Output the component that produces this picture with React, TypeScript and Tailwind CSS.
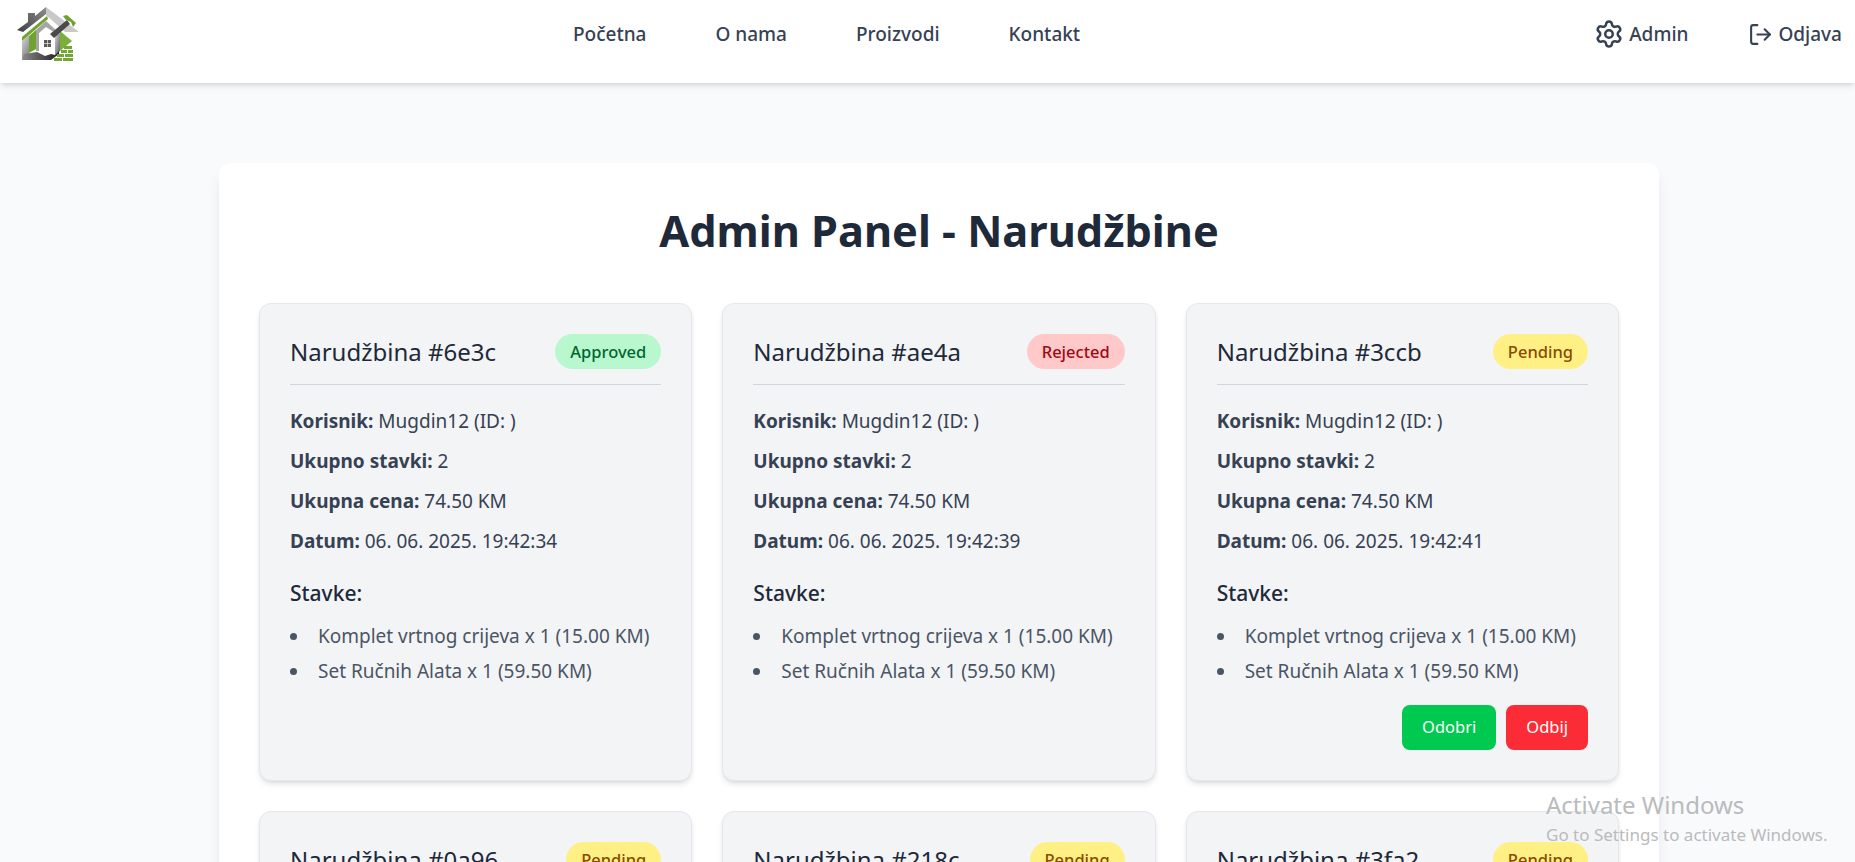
import React from 'react';
import { Settings, LogOut } from 'lucide-react';

const orders = [
  { id: '6e3c', status: 'Approved', date: '06. 06. 2025. 19:42:34' },
  { id: 'ae4a', status: 'Rejected', date: '06. 06. 2025. 19:42:39' },
  { id: '3ccb', status: 'Pending', date: '06. 06. 2025. 19:42:41' },
  { id: '0a96', status: 'Pending', date: '06. 06. 2025. 19:42:43' },
  { id: '218c', status: 'Pending', date: '06. 06. 2025. 19:42:45' },
  { id: '3fa2', status: 'Pending', date: '06. 06. 2025. 19:42:47' },
];

const Logo = () => (
  <svg viewBox="0 0 62 54" className="w-[62px] h-[54px] blur-[0.4px]">
    <defs>
      <linearGradient id="roofDark" x1="0" y1="1" x2="1" y2="0">
        <stop offset="0" stopColor="#3f3f3f" />
        <stop offset="1" stopColor="#8c8c8c" />
      </linearGradient>
      <linearGradient id="wall" x1="0" y1="0" x2="1" y2="1">
        <stop offset="0" stopColor="#d8d8d8" />
        <stop offset="1" stopColor="#5c5c5c" />
      </linearGradient>
      <linearGradient id="swoosh" x1="0" y1="0" x2="1" y2="0">
        <stop offset="0" stopColor="#8a8a8a" />
        <stop offset="1" stopColor="#202020" />
      </linearGradient>
    </defs>
    <polygon points="0,23 11,15 11,6 18,6 18,9 29,0 29,7 6,25" fill="url(#roofDark)" />
    <polygon points="29,0 62,25 48,25 29,8" fill="#c9c9c9" />
    <polygon points="5,30 30,9 31,12 5,34" fill="#6fa32e" />
    <polygon points="5,34 12,28 12,47 18,46 5,53" fill="url(#wall)" />
    <polygon points="12,29 19,23 19,42 12,46" fill="#6fa32e" />
    <polygon points="19,23 29,14 40,24 40,27 29,20 22,26 22,44 19,44" fill="#a5a5a5" />
    <polygon points="40,24 43,27 43,44 38,48 38,30" fill="url(#wall)" />
    <polygon points="43,24 55,34 43,44" fill="#7cae3a" />
    <polygon points="22,27 29,21 36,27 36,46 29,46 22,40" fill="#ffffff" />
    <rect x="27" y="33" width="7" height="7" fill="#5a5a5a" />
    <path d="M30.5 33v7M27 36.5h7" stroke="#ffffff" strokeWidth="0.6" />
    <polygon points="5,53 7,47 20,45 28,49 34,47 38,48 42,44 42,47 34,53" fill="url(#swoosh)" />
    <polygon points="33,27 50,13 53,17 37,31" fill="#4a4a4a" />
    <polygon points="46,9 49,13 54,15 56,20 59,16 50,8" fill="#6fa32e" />
    <g fill="#74a834">
      <rect x="47" y="39" width="8" height="3" />
      <rect x="44" y="43" width="6" height="3" />
      <rect x="51" y="43" width="5" height="3" />
      <rect x="40" y="47" width="7" height="3" />
      <rect x="48" y="47" width="8" height="3" />
      <rect x="37" y="51" width="8" height="3" />
      <rect x="46" y="51" width="10" height="3" />
    </g>
  </svg>
);

const StatusBadge = ({ status }: { status: string }) => {
  const color =
    status === 'Approved'
      ? 'bg-[#b9f8cf] text-[#016630]'
      : status === 'Rejected'
        ? 'bg-[#ffc9c9] text-[#9f0712]'
        : 'bg-[#fff085] text-[#894b00]';
  return <span className={`px-[15px] py-1 rounded-full text-[16.5px] font-medium leading-[27px] ${color}`}>{status}</span>;
};

const OrderCard = ({ order }: { order: (typeof orders)[number] }) => (
  <div className="h-[478px] bg-[#f3f4f6] border border-[#e5e7eb] rounded-xl shadow-md px-[30px] pt-[30px] flex flex-col">
    <div className="flex items-center justify-between pb-[15px] mb-[22px] border-b border-[#d1d5dc]">
      <h3 className="text-2xl font-normal text-[#1e2939] leading-[35px]">Narudžbina #{order.id}</h3>
      <StatusBadge status={order.status} />
    </div>
    <div className="text-[#364153] text-[19px] leading-7 space-y-3">
      <p><strong className="font-bold">Korisnik:</strong> Mugdin12 (ID: )</p>
      <p><strong className="font-bold">Ukupno stavki:</strong> 2</p>
      <p><strong className="font-bold">Ukupna cena:</strong> 74.50 KM</p>
      <p><strong className="font-bold">Datum:</strong> {order.date}</p>
    </div>
    <h4 className="mt-6 text-[21px] font-medium text-[#1e2939] leading-7">Stavke:</h4>
    <ul className="mt-[15px] text-[#4a5565] text-[19px] leading-7 space-y-[7px]">
      <li className="flex items-center"><span className="w-[7px] h-[7px] rounded-full bg-[#4a5565] mr-[21px]" />Komplet vrtnog crijeva x 1 (15.00 KM)</li>
      <li className="flex items-center"><span className="w-[7px] h-[7px] rounded-full bg-[#4a5565] mr-[21px]" />Set Ručnih Alata x 1 (59.50 KM)</li>
    </ul>
    {order.status === 'Pending' && (
      <div className="mt-5 flex justify-end gap-[10px]">
        <button className="px-5 h-[45px] rounded-lg bg-[#00c950] text-white text-[16.5px]">Odobri</button>
        <button className="px-5 h-[45px] rounded-lg bg-[#fb2c36] text-white text-[16.5px]">Odbij</button>
      </div>
    )}
  </div>
);

export default function App() {
  return (
    <div className="h-screen overflow-hidden bg-[#f9fafb] font-['Noto_Sans','Open_Sans',sans-serif] relative">
      <nav className="h-[83px] bg-white shadow-md flex items-center pl-[17px] pr-[13px] pb-[15px] relative">
        <div className="w-[556px]"><Logo /></div>
        <div className="flex gap-[69px] text-[19px] font-medium text-[#364153]">
          <a>Početna</a>
          <a>O nama</a>
          <a>Proizvodi</a>
          <a>Kontakt</a>
        </div>
        <div className="ml-auto flex items-center gap-[60px] text-[19px] font-medium text-[#364153]">
          <a className="flex items-center gap-[5px]"><Settings size={30} />Admin</a>
          <a className="flex items-center gap-[5px]"><LogOut size={25} />Odjava</a>
        </div>
      </nav>
      <main className="pt-20 pl-[219px]">
        <div className="w-[1440px] bg-white rounded-xl shadow-lg px-10 pt-[40px] pb-10">
          <h1 className="text-[43.3px] font-bold text-[#1e2939] text-center leading-[56px] mb-[44px]">Admin Panel - Narudžbine</h1>
          <div className="grid grid-cols-3 gap-x-[30px] gap-y-[30px]">
            {orders.map((o) => <OrderCard key={o.id} order={o} />)}
          </div>
        </div>
      </main>
      <div className="absolute left-[1546px] top-[789px] text-[#b9bbbd] pointer-events-none">
        <p className="text-2xl leading-8">Activate Windows</p>
        <p className="text-[17px] leading-6 mt-[2px]">Go to Settings to activate Windows.</p>
      </div>
    </div>
  );
}
